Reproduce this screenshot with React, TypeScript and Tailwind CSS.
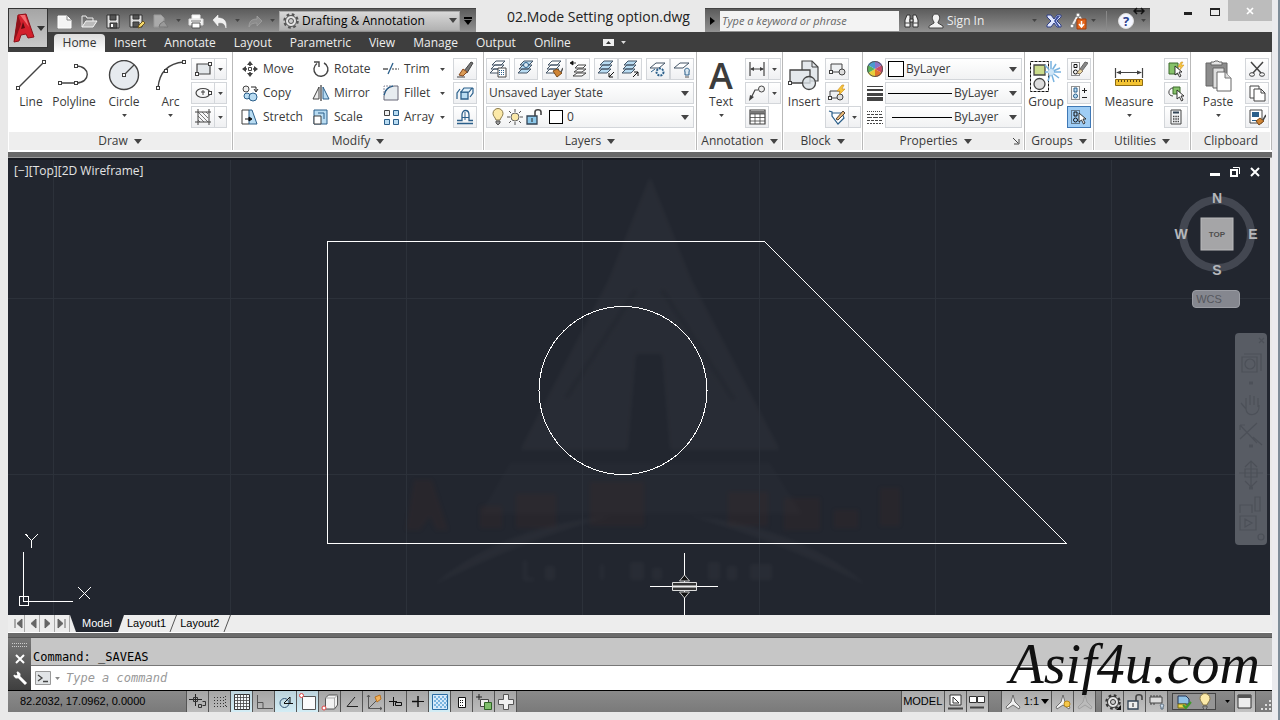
import type { ReactNode } from "react";
import clsx from "clsx";

interface IconProps {
  w?: number;
  h?: number;
  children: ReactNode;
  className?: string;
}
const Icon = ({ w = 18, h = 18, children, className }: IconProps) => (
  <svg
    width={w}
    height={h}
    viewBox={`0 0 ${w} ${h}`}
    fill="none"
    stroke="#444"
    className={clsx("shrink-0", className)}
    aria-hidden="true"
  >
    {children}
  </svg>
);

const Caret = ({ small, className }: { small?: boolean; className?: string }) => (
  <svg
    width={small ? 5 : 8}
    height={small ? 3 : 5}
    viewBox="0 0 8 5"
    className={clsx("pointer-events-none shrink-0", className ?? "text-[#444]")}
    aria-hidden="true"
  >
    <path d="M0 0h8L4 5z" fill="currentColor" />
  </svg>
);

const DARK = "#3f3f3f";
const BLUE = "#2b5f8a";
const SKY = "#b9dcf2";

/* quick access toolbar */
const qat = {
  new: (
    <Icon>
      <path d="M2 4h9l4 4v8H2z" fill="#f4f4f4" stroke="#fff" />
      <path d="M11 4v4h4" stroke="#888" />
    </Icon>
  ),
  open: (
    <Icon>
      <path d="M2 15V4h4l1 2h6v3" stroke="#eee" />
      <path d="M2 15L6 9h11l-4 6z" fill="#bbb" stroke="#f4f4f4" />
    </Icon>
  ),
  save: (
    <Icon>
      <path d="M3 3h12v13H3z" fill="#ddd" stroke="#333" />
      <path d="M6 3h6v5H6zM6 11h7v5H6z" fill="#555" stroke="#333" />
      <path d="M8 12v3" stroke="#fff" strokeWidth="2" />
    </Icon>
  ),
  saveAs: (
    <Icon>
      <path d="M2 3h12v12H2z" fill="#ddd" stroke="#333" />
      <path d="M5 3h6v4H5zM5 10h6v5H5z" fill="#555" stroke="#333" />
      <path d="M10 16l1-3 4-4 2 2-4 4z" fill="#f5d86b" stroke="#6b5520" />
    </Icon>
  ),
  sheets: (
    <Icon>
      <path d="M2 3h7l3 3v9H2z" fill="#aaa" stroke="#999" />
      <path d="M8 12l4-3 4 6H7z" fill="#999" stroke="#777" />
    </Icon>
  ),
  print: (
    <Icon>
      <path d="M5 7V3h8v4" fill="#fff" stroke="#eee" />
      <path d="M2 7h14v6H2z" fill="#f4f4f4" stroke="#ddd" />
      <path d="M5 11h8v5H5z" fill="#fff" stroke="#555" />
      <path d="M4 9h10" stroke="#777" />
    </Icon>
  ),
  undo: (
    <Icon>
      <path d="M7 3v3c5 0 9 2 8 10-1-4-3-6-8-5v3L2 8z" fill="#f0f0f0" stroke="#fff" strokeWidth=".5" />
    </Icon>
  ),
  redo: (
    <Icon>
      <path d="M11 4v3C6 7 3 9 3 15c1-3 4-4 8-4v3l5-5z" fill="#8b8b8b" stroke="#a5a5a5" strokeWidth=".7" />
    </Icon>
  ),
};

const GearShape = ({ stroke = "#333", fill = "none" }) => (
  <>
    <circle cx="9" cy="9" r="6.5" fill={fill} stroke={stroke} strokeWidth="2.5" strokeDasharray="2.6 2.5" />
    <circle cx="9" cy="9" r="5.5" fill="#e4e4e4" stroke={stroke} />
    <circle cx="9" cy="9" r="2.5" fill="#ccc" stroke={stroke} />
  </>
);

/* draw panel */
const node = (x: number, y: number) => (
  <rect key={`${x}-${y}`} x={x - 1.5} y={y - 1.5} width="3" height="3" fill="#fff" stroke={DARK} />
);
const draw = {
  line: (
    <Icon w={32} h={32}>
      <path d="M3 28L29 2" strokeWidth="1.4" />
      {node(3, 28)}
      {node(29, 2)}
    </Icon>
  ),
  polyline: (
    <Icon w={32} h={32}>
      <path d="M2 23h16c15 0 15-17 0-17" strokeWidth="1.4" />
      {node(2, 23)}
      {node(18, 23)}
      {node(18, 6)}
    </Icon>
  ),
  circle: (
    <Icon w={32} h={32}>
      <circle cx="16" cy="15" r="14.5" fill="#e6eaee" strokeWidth="1.4" />
      <path d="M16 15L26 5" strokeWidth="1.2" />
      {node(16, 15)}
    </Icon>
  ),
  arc: (
    <Icon w={32} h={32}>
      <path d="M3 28Q5 4 29 2" strokeWidth="1.4" />
      {node(3, 28)}
      {node(11, 11)}
      {node(29, 2)}
    </Icon>
  ),
  rect: (
    <Icon>
      <path d="M3 4h13v10H3z" fill="#e3e7ea" strokeWidth="1.2" />
      {node(3, 14)}
      {node(16, 4)}
    </Icon>
  ),
  ellipse: (
    <Icon>
      <ellipse cx="9" cy="9" rx="7" ry="4.5" strokeWidth="1.2" />
      <path d="M9 6v5M7 8h4" />
      {node(16, 9)}
    </Icon>
  ),
  hatch: (
    <Icon>
      <path d="M4 1v16M15 1v16M1 4h16M1 14h16" />
      <path d="M4 8l6 6M4 4l10 10M8 4l6 6M12 4l2 2M4 12l2 2" strokeWidth=".7" />
    </Icon>
  ),
};

/* modify panel */
const modify = {
  move: (
    <Icon>
      <path d="M9 3v3M9 12v3M3 9h3M12 9h3" stroke={DARK} strokeWidth="1.6" />
      <path d="M9 1l3 4H6zM9 17l3-4H6zM1 9l4-3v6zM17 9l-4-3v6z" fill={DARK} stroke="none" />
      <path d="M7.5 7.5h3v3h-3z" fill="#fff" />
    </Icon>
  ),
  copy: (
    <Icon>
      <circle cx="5" cy="5" r="3" fill="#eee" />
      <circle cx="6" cy="12" r="3" fill={SKY} stroke={BLUE} />
      <circle cx="12" cy="13" r="4" fill={SKY} stroke={BLUE} />
      <path d="M10 3h5v4M13 5l2 3 2-3" stroke="#222" />
    </Icon>
  ),
  stretch: (
    <Icon>
      <path d="M11 2l5 14H8V2z" fill={SKY} stroke={BLUE} />
      <path d="M8 2H1v14h7" stroke={DARK} />
      <path d="M4 11h6M8 9l3 2-3 2z" fill="#111" stroke="#111" />
    </Icon>
  ),
  rotate: (
    <Icon>
      <path d="M5 3.5A7 7 0 1 0 12 3" strokeWidth="1.4" />
      <path d="M2 2h5v5" strokeWidth="1.4" />
    </Icon>
  ),
  mirror: (
    <Icon>
      <path d="M1 15L7 3v12z" fill="#eee" />
      <path d="M17 15L11 3v12z" fill={SKY} stroke={BLUE} />
      <path d="M9 1v16" stroke="#111" />
    </Icon>
  ),
  scale: (
    <Icon>
      <path d="M2 2h13v14H2z" fill={SKY} stroke={BLUE} />
      <path d="M2 8h7v8H2z" fill="#fff" stroke={DARK} />
      <path d="M6 5h6v6" stroke={BLUE} />
    </Icon>
  ),
  trim: (
    <Icon>
      <path d="M1 9h5" stroke={DARK} strokeWidth="1.3" />
      <path d="M6 14L11 3" stroke={BLUE} strokeWidth="1.3" />
      <path d="M10 9h7" stroke={DARK} strokeDasharray="2 1" />
    </Icon>
  ),
  fillet: (
    <Icon>
      <path d="M2 16V12Q3 3 12 2h4v14z" fill="#e7ecf0" stroke="#667" />
      <path d="M2 11Q4 3 11 2" stroke={BLUE} strokeWidth="1.5" />
      <path d="M2 9V2h7" stroke="#889" strokeDasharray="2 1" />
    </Icon>
  ),
  array: (
    <Icon>
      <path d="M2.5 2.5h5v5h-5z" fill="#eee" stroke={DARK} />
      <path d="M11.500 2.500h5v5h-5zM2.500 11.500h5v5h-5zM11.500 11.500h5v5h-5z" fill={SKY} stroke={BLUE} />
    </Icon>
  ),
  erase: (
    <Icon>
      <path d="M8 11L15 2l2 1-6 10z" fill="#777" stroke="#444" />
      <path d="M3 15l4-6 4 3-4 4z" fill="#d99a55" stroke="#8a4a1f" />
      <path d="M1 17h8" />
    </Icon>
  ),
  explode: (
    <Icon>
      <path d="M5 8h7v7H5z" fill={SKY} stroke={BLUE} strokeWidth="1.3" />
      <path d="M5 8l3-4h8l-3 4zM14 13l3-4V4M1 15V9l3-4" fill="#dff0fb" stroke={BLUE} strokeWidth="1.2" />
    </Icon>
  ),
  offset: (
    <Icon>
      <path d="M1 15.500h16M1 12.500h5V7c0-6 7-6 7 0v5.500h4" stroke={BLUE} strokeWidth="1.3" />
      <path d="M9 4v8M6 9.500h7" stroke={BLUE} />
    </Icon>
  ),
};

const Stack = ({ children, fill = "#fff" }: { children?: ReactNode; fill?: string }) => (
  <Icon>
    <path d="M1 13l4-4h9l-4 4zM2 9l4-4h9l-4 4zM3 5l4-4h9l-4 4z" fill={fill} stroke="#456" />
    {children}
  </Icon>
);
const Plane = ({ children }: { children?: ReactNode }) => (
  <Icon>
    <path d="M1 8l6-5h9l-6 5z" fill="#fff" stroke="#456" />
    {children}
  </Icon>
);
const layers = {
  props: (
    <Stack>
      <path d="M9 8h8v9H9z" fill="#fff" />
      <path d="M10 10.500h6M10 12.500h6M10 14.500h6" stroke={BLUE} strokeDasharray="1 1" />
    </Stack>
  ),
  current: (
    <Stack fill={SKY}>
      <circle cx="9" cy="5" r="2.5" fill="#dce9f2" stroke={BLUE} />
    </Stack>
  ),
  match: (
    <Stack>
      <path d="M8 11l4-2 5 4-5 4z" fill="#cf8434" stroke="#7b4a18" />
      <path d="M16 12l2-4" stroke="#555" strokeWidth="1.5" />
    </Stack>
  ),
  previous: (
    <Icon>
      <path d="M4 16l4-3h9l-4 3zM5 12l4-3h8l-4 3zM6 8l3-3h8l-3 3z" fill="#fff" />
      <path d="M2 3h5M4 1L1 3l3 2z" stroke="#111" fill="#111" strokeWidth=".8" />
    </Icon>
  ),
  isolate: (
    <Stack fill={SKY}>
      <path d="M17 12l-5 5M12 13v4h4" stroke="#111" />
    </Stack>
  ),
  unisolate: (
    <Stack fill={SKY}>
      <path d="M12 17l5-5M13 12h4v4" stroke="#111" />
    </Stack>
  ),
  freeze: (
    <Plane>
      <circle cx="11" cy="12" r="3.5" fill="#eaf4fb" stroke={BLUE} strokeWidth="2" strokeDasharray="2 1" />
      <path d="M2 12l4-3" stroke={BLUE} />
    </Plane>
  ),
  off: (
    <Plane>
      <path d="M12 15v-3c-2-5 6-5 4 0v3z" fill="#dce9f2" stroke={BLUE} />
      <path d="M12 17h4" stroke="#555" />
    </Plane>
  ),
};

const Bulb = () => (
  <Icon w={14} h={18}>
    <path d="M5 12C4 9 2 8 2 5.500a5 5 0 0 1 10 0C12 8 10 9 9 12z" fill="#fbe9a8" stroke="#8a7a4a" />
    <path d="M5 13h4v2L7 17l-2-2z" fill="#999" stroke="#555" />
  </Icon>
);
const Sun = () => (
  <Icon w={16} h={18}>
    <circle cx="8" cy="9" r="4" fill="#fbe9a8" stroke="#666" />
    <path d="M8 1v3M8 14v3M0 9h3M13 9h3M2 3l2 2M12 13l2 2M14 3l-2 2M4 13l-2 2" stroke="#555" />
  </Icon>
);
const Unlock = ({ fill = "#8cc8ea" }) => (
  <Icon w={18} h={18}>
    <path d="M2 8h10v8H2z" fill={fill} stroke="#345" strokeWidth="1.3" />
    <path d="M10 8V4c0-3 6-3 6 0v3" strokeWidth="1.6" />
    <path d="M7 10v4" stroke="#222" />
  </Icon>
);

/* annotation and block panels */
const annotate = {
  dim: (
    <Icon>
      <path d="M2 2v14M16 2v14M3 9h12" strokeWidth="1.2" />
      <path d="M2 9l4-2v4zM16 9l-4-2v4z" fill={DARK} stroke="none" />
    </Icon>
  ),
  leader: (
    <Icon>
      <circle cx="13.500" cy="5" r="3" fill="#eee" />
      <path d="M10 6H7L3 14" strokeWidth="1.2" />
      <path d="M1 17l1-6 4 2z" fill={DARK} stroke="none" />
    </Icon>
  ),
  table: (
    <Icon>
      <path d="M2 2h15v14H2z" fill="#fff" strokeWidth="1.2" />
      <path d="M2 3h15v3H2z" fill="#777" stroke="none" />
      <path d="M2 6h15M2 9.500h15M2 13h15M7 6v10M12 6v10" strokeWidth=".8" />
    </Icon>
  ),
};
const block = {
  insert: (
    <Icon w={32} h={32}>
      <path d="M14 1h10l6 6v14H14z" fill="#e4e8ec" strokeWidth="1.200" />
      <path d="M24 1v6h6" />
      <path d="M2 10h20v13H2z" fill="#e4e8ec" strokeWidth="1.300" />
      <circle cx="21" cy="23" r="6.500" fill="#dbe1e6" fillOpacity=".8" strokeWidth="1.300" />
      {node(2, 23)}
    </Icon>
  ),
  create: (
    <Icon>
      <path d="M3 4h11v8H3z" fill="#eef0f2" />
      <circle cx="14" cy="12" r="3" fill="#ddd" />
      {node(3, 12)}
    </Icon>
  ),
  edit: (
    <Icon>
      <path d="M2 7h10v7H2z" fill="#eef0f2" />
      <circle cx="12" cy="13" r="3" fill="#ddd" />
      <path d="M14 1L9 7h3l-1 4 6-6h-3l2-4z" fill="#f8c73d" stroke="#c98a1c" strokeWidth=".6" />
      {node(2, 14)}
    </Icon>
  ),
  attribute: (
    <Icon>
      <path d="M1 3l3 1v4l6 8 6-6-2-5H4" fill="#fff" stroke={BLUE} strokeWidth="1.2" />
      <path d="M8 11l7-8 2 2-7 7z" fill="#e8b878" stroke="#543" />
    </Icon>
  ),
};

const ColorWheel = () => (
  <Icon w={16} h={16}>
    <g stroke="none">
      <path d="M8 8L8 0A8 8 0 0 1 15 4z" fill="#8a72c9" />
      <path d="M8 8L15 4A8 8 0 0 1 15 12z" fill="#cc4a6a" />
      <path d="M8 8L15 12A8 8 0 0 1 8 16z" fill="#e2722b" />
      <path d="M8 8L8 16A8 8 0 0 1 1 12z" fill="#e8cf3b" />
      <path d="M8 8L1 12A8 8 0 0 1 1 4z" fill="#58b35a" />
      <path d="M8 8L1 4A8 8 0 0 1 8 0z" fill="#4a9bd0" />
    </g>
    <circle cx="8" cy="8" r="7.500" stroke="#555" />
  </Icon>
);
const Weights = () => (
  <Icon w={16} h={16}>
    <path d="M0 1.500h16" />
    <path d="M0 5h16" strokeWidth="2" />
    <path d="M0 9.500h16" strokeWidth="3" />
    <path d="M0 14h16" strokeWidth="4" />
  </Icon>
);
const Linetypes = () => (
  <Icon w={16} h={16}>
    <path d="M0 2.500h16" strokeDasharray="1 1" />
    <path d="M0 5.500h16M0 11.500h16" strokeDasharray="3 1" />
    <path d="M0 8.500h16" strokeDasharray="5 1" />
    <path d="M0 14.500h16" strokeDasharray="2 1" />
  </Icon>
);

const Pointer = ({ x, y }: { x: number; y: number }) => (
  <path
    transform={`translate(${x} ${y})`}
    d="M0 0v9l2.500-2 2 4 1.500-1-2-4h3z"
    fill="#fff"
    stroke="#222"
    strokeWidth=".9"
  />
);
const groups = {
  group: (
    <Icon w={34} h={34}>
      <path d="M1.500 2.500h18v30h-18z" stroke="#111" strokeDasharray="3 1" />
      <path d="M5 6h11v10H5z" fill="#cbdc8b" strokeWidth="1.300" />
      <circle cx="10.500" cy="25" r="5.500" fill="#ddd" strokeWidth="1.300" />
      <path
        d="M22 13V2M22 13l5-8M22 13l9-4M22 13h10M22 13l8 6M22 13l3 10M22 13l-3 9M22 13l-6-7M22 13h-6"
        stroke="#79b3df"
        strokeWidth="1.500"
      />
      <circle cx="22" cy="13" r="3" fill="#cfe6f8" stroke="none" />
    </Icon>
  ),
  ungroup: (
    <Icon>
      <path d="M1.500 2.500h8v13h-8z" stroke="#222" strokeDasharray="1 1" />
      <path d="M4 4.500h3v3H4z" stroke="#111" />
      <circle cx="5.500" cy="12" r="2" stroke="#111" />
      <path d="M10 9l5-7 3 1-6 8z" fill="#888" stroke="#666" />
      <path d="M7 13l3-4 3 2-3 3z" fill="#ead8a0" stroke="#876" />
    </Icon>
  ),
  edit: (
    <Icon>
      <path d="M1.500 2.500h8v13h-8z" stroke="#222" strokeDasharray="1 1" />
      <path d="M4 4h3v4H4z" stroke={BLUE} fill={SKY} />
      <circle cx="5.500" cy="12" r="2" stroke={BLUE} fill={SKY} />
      <path d="M12 6.500h5M14.500 4v5M12 13.500h5" stroke="#222" />
    </Icon>
  ),
  select: (
    <Icon>
      <path d="M1.500 2.500h8v13h-8z" stroke="#222" strokeDasharray="1 1" />
      <path d="M4 4h3v4H4z" stroke="#111" />
      <circle cx="5.500" cy="12" r="2" stroke="#111" />
      <Pointer x={9} y={5} />
    </Icon>
  ),
};
const utilities = {
  measure: (
    <Icon w={32} h={32}>
      <path d="M2.500 8v10M29.500 8v10M4 12.500h24" strokeWidth="1.200" />
      <path d="M3 12.500l5-2v4zM29 12.500l-5-2v4z" fill={DARK} stroke="none" />
      <path d="M2.500 19.500h27v6h-27z" fill="#f3c332" stroke="#8d6b12" />
      <path d="M5 21h23" stroke="#5b4510" strokeWidth="2" strokeDasharray="1 2" />
    </Icon>
  ),
  quick: (
    <Icon>
      <path d="M2 3h9v11H2z" fill="#86c26a" stroke="#3d6b2c" />
      <path d="M14 2l-3 5h3l-2 4 5-6h-3l2-3z" fill="#f8c73d" stroke="#c98a1c" strokeWidth=".5" />
      <Pointer x={8} y={6} />
    </Icon>
  ),
  similar: (
    <Icon>
      <path d="M6 3h7v7H6z" fill="#86c26a" stroke="#3d6b2c" />
      <path d="M6 4c-5 0-6 8 0 8" />
      <Pointer x={10} y={6} />
    </Icon>
  ),
  calc: (
    <Icon>
      <path d="M4 2h10v14H4z" fill="#f4f6f8" />
      <path d="M6 4.500h6" stroke="#345" strokeWidth="2" />
      <path d="M6 8.500h6M6 11h6M6 13.500h6" strokeDasharray="1.500 .8" strokeWidth="1.500" />
    </Icon>
  ),
};
const clipboard = {
  paste: (
    <Icon w={32} h={32}>
      <path d="M4 3h21v23H4z" fill="#8c8c8c" stroke="#666" />
      <path d="M9 5V2h3l1-1h3l1 1h3v3z" fill="#e6e6e6" stroke="#666" />
      <path d="M11 8h11v20H11z" fill="#dfdfdf" stroke="#666" />
      <path d="M15 12h8l6 6v13H15z" fill="#fff" stroke="#666" />
      <path d="M23 12v6h6" stroke="#777" fill="#ddd" />
    </Icon>
  ),
  cut: (
    <Icon>
      <path d="M3 2l10 11M15 2L5 13" strokeWidth="1.500" />
      <ellipse cx="4" cy="14.500" rx="2.500" ry="1.800" />
      <ellipse cx="14" cy="14.500" rx="2.500" ry="1.800" />
    </Icon>
  ),
  copy: (
    <Icon>
      <path d="M2 2h9v12H2z" fill="#fff" />
      <path d="M6 5h7l4 4v8H6z" fill="#fff" />
      <path d="M13 5v4h4" />
    </Icon>
  ),
  match: (
    <Icon>
      <path d="M2 2h12v13H2z" fill="#fff" />
      <path d="M4 4h7v5H4z" fill={BLUE} stroke="none" />
      <path d="M4 12.500h5" stroke={BLUE} />
      <path d="M8 13l4-3 4 3-5 4z" fill="#cf8434" stroke="#7b4a18" />
      <path d="M15 12l3-5" strokeWidth="1.500" />
    </Icon>
  ),
};

interface BtnProps {
  label: string;
  icon: ReactNode;
  active?: boolean;
}
const ToolButton = ({ label, icon, active }: BtnProps) => (
  <button
    aria-label={label}
    className={clsx(
      "flex h-[22px] w-6 items-center justify-center border",
      active ? "border-[#3f78b5] bg-[#9fcdf5]" : "border-[#d3d6da] bg-gradient-to-b from-white to-[#eff0f2]"
    )}
  >
    {icon}
  </button>
);
const SplitButton = ({ label, icon }: BtnProps) => (
  <div className="flex">
    <ToolButton label={label} icon={icon} />
    <button
      aria-label={`${label} options`}
      className="-ml-px flex h-[22px] w-[13px] items-center justify-center border border-[#d3d6da] bg-gradient-to-b from-white to-[#eff0f2]"
    >
      <Caret small />
    </button>
  </div>
);
const BigButton = ({ label, icon, menu, className }: BtnProps & { menu?: boolean; className?: string }) => (
  <button className={clsx("flex shrink-0 flex-col items-center", className)}>
    <span className="flex h-9 items-center justify-center">{icon}</span>
    <span className="leading-4">{label}</span>
    {menu && <Caret small className="mt-1 text-[#444]" />}
  </button>
);
const TextButton = ({ label, icon, menu }: BtnProps & { menu?: boolean }) => (
  <button className="flex h-[22px] items-center">
    {icon}
    <span className="ml-1">{label}</span>
    {menu && <Caret small className="mr-2 ml-auto text-[#444]" />}
  </button>
);
const Column = ({ children, className }: { children: ReactNode; className?: string }) => (
  <div className={clsx("flex shrink-0 flex-col gap-0.5", className)}>{children}</div>
);

interface ComboProps {
  label: string;
  value: string;
  children?: ReactNode;
}
const Combo = ({ label, value, children }: ComboProps) => (
  <div className="flex h-[22px] w-full min-w-0 items-center border border-[#d3d6da] bg-gradient-to-b from-white to-[#f1f2f3] px-0.5">
    {children}
    <select aria-label={label} className="min-w-0 flex-1 appearance-none bg-transparent outline-none">
      <option>{value}</option>
    </select>
    <Caret className="mr-0.5 text-[#444]" />
  </div>
);

interface PanelProps {
  title: string;
  menu?: boolean;
  launcher?: boolean;
  children: ReactNode;
}
const Panel = ({ title, menu = true, launcher, children }: PanelProps) => (
  <section className="flex min-w-0 flex-col border-r border-[#b9b9b9] bg-white">
    <div className="flex h-20 pt-1.5">{children}</div>
    <footer className="mx-px flex h-[18px] items-center justify-center bg-[#eeeeee]">
      <span>{title}</span>
      {menu && <Caret className="ml-1.5 text-[#444]" />}
      {launcher && (
        <Icon w={8} h={8} className="-mr-8 ml-10">
          <path d="M1 1l5 5M7 2v5H2" />
        </Icon>
      )}
    </footer>
  </section>
);

const tabs = ["Insert", "Annotate", "Layout", "Parametric", "View", "Manage", "Output", "Online"];

const Bar = "bg-gradient-to-b from-[#5c5c5c] to-[#929292]";

function TitleBar() {
  return (
    <header className="relative flex h-8">
      <div className={clsx("mt-2 flex w-[468px] shrink-0 items-center border-t border-[#444] pl-12", Bar)}>
        <div className="flex flex-1 items-center gap-1.5">
          <button aria-label="New">{qat.new}</button>
          <button aria-label="Open">{qat.open}</button>
          <button aria-label="Save">{qat.save}</button>
          <button aria-label="Save as">{qat.saveAs}</button>
          <button aria-label="Sheet set">{qat.sheets}</button>
          <Caret small />
          <button aria-label="Plot">{qat.print}</button>
          <button aria-label="Undo">{qat.undo}</button>
          <Caret small />
          <button aria-label="Redo">{qat.redo}</button>
          <Caret small />
        </div>
        <div className="flex h-5 w-[181px] items-center border border-[#aaa] bg-gradient-to-b from-[#d8d8d8] to-[#b2b2b2] px-0.5">
          <Icon>
            <GearShape stroke="#555" />
          </Icon>
          <select aria-label="Workspace" className="min-w-0 flex-1 appearance-none bg-transparent pl-0.5 text-black outline-none">
            <option>Drafting &amp; Annotation</option>
          </select>
          <Caret />
        </div>
        <button aria-label="Customize toolbar" className="flex h-full w-4 flex-col items-center justify-center gap-px">
          <span className="h-0.5 w-2 bg-black" />
          <Caret className="text-black" />
        </button>
      </div>
      <h1 className="flex flex-1 items-center justify-center pl-4 text-[14px] whitespace-nowrap text-[#222]">
        02.Mode Setting option.dwg
      </h1>
      <div className={clsx("mt-2 flex w-[445px] shrink-0 items-center border-t border-[#444]", Bar)}>
        <button aria-label="Collapse search" className="flex w-[15px] justify-center">
          <Icon w={5} h={8}>
            <path d="M0 0l5 4-5 4z" fill="#000" stroke="none" />
          </Icon>
        </button>
        <input
          aria-label="Search"
          placeholder="Type a keyword or phrase"
          className="h-5 w-[179px] bg-[#f3f3f3] px-0.5 text-[11px] italic outline-none placeholder:text-[#666]"
        />
        <button aria-label="Find" className="ml-1">
          <Icon>
            <path d="M2 15V8l2-5h3v12zM10 15V3h3l2 5v7z" fill="#f2f2f2" stroke="#333" />
            <path d="M7 7h3v3H7z" fill="#ddd" stroke="#333" />
            <path d="M2 11h5M10 11h5" />
          </Icon>
        </button>
        <button className="ml-1.5 flex items-center gap-0.5 text-[#eee]">
          <Icon>
            <path d="M9 2c-5 0-4 6-2 8v1l-5 3v2h14v-2l-5-3v-1c2-2 3-8-2-8z" fill="#f2f2f2" stroke="#444" />
          </Icon>
          Sign In
        </button>
        <Caret small className="ml-auto text-[#444]" />
        <button aria-label="Exchange" className="ml-2">
          <Icon>
            <path d="M2 3h4l3 4 3-4h4v2l-4 4 4 4v2h-4l-3-4-3 4H2v-2l4-4-4-4z" fill="#dfe6ff" stroke="#2f3f86" />
            <path d="M9 9l3-5h3l-4 5 4 6h-2z" fill="#3d4f9c" stroke="none" />
          </Icon>
        </button>
        <button aria-label="Stay connected" className="ml-1.5">
          <Icon>
            <path d="M3 14L9 3l4 5" stroke="#eee" strokeWidth="2" />
            <circle cx="9" cy="3" r="2" fill="#fff" stroke="#777" />
            <circle cx="3" cy="14" r="2" fill="#fff" stroke="#777" />
            <path d="M8 7h9v10H8z" fill="#e2641b" stroke="#a33f0c" />
            <path d="M12.500 9v5M10 12l2.500 3 2.500-3" stroke="#fff" strokeWidth="1.500" />
          </Icon>
        </button>
        <Caret small className="ml-1 text-[#444]" />
        <span className="mx-2.5 h-5 w-px bg-[#888]" />
        <button aria-label="Help" className="mr-1.5">
          <Icon>
            <circle cx="9" cy="9" r="7.500" fill="#f4f6ff" stroke="#ddd" />
            <text x="9" y="14" textAnchor="middle" fontSize="13" fontWeight="700" fill="#2b3f8c" stroke="none">
              ?
            </text>
          </Icon>
        </button>
        <Caret small className="mr-1 text-[#444]" />
      </div>
      <Icon w={12} h={8} className="absolute top-[7px] right-[127px]">
        <path d="M2 4h8M4 1L1 4l3 3M8 1l3 3-3 3" stroke="#111" strokeWidth="1.500" />
      </Icon>
      <div className="ml-auto flex h-[21px] w-[122px] shrink-0">
        <button aria-label="Minimize" className="ml-6 flex w-7 items-center justify-center">
          <span className="mt-1.5 h-[3px] w-2 bg-[#222]" />
        </button>
        <button aria-label="Maximize" className="flex w-[26px] items-center justify-center">
          <span className="mt-0.5 h-2 w-2.5 border border-t-2 border-[#222]" />
        </button>
        <button aria-label="Close" className="flex flex-1 items-center justify-center bg-[#bcbcbc]">
          <Icon w={8} h={8}>
            <path d="M1 1l6 6M7 1L1 7" stroke="#fff" strokeWidth="1.700" />
          </Icon>
        </button>
      </div>
      <button
        aria-label="Application menu"
        className="absolute top-2 left-0 z-10 flex h-10 w-10 items-center border border-[#333] bg-gradient-to-b from-[#a5a5a5] to-[#c9c9c9] pl-1"
      >
        <Icon w={24} h={34}>
          <path d="M5 4l8-1 8 23-6 1-2-4-5 1-2 6-5 1z" fill="#d3202c" stroke="#8f1119" />
          <path d="M5 4l3 9-4 11-3 7z" fill="#8f1119" stroke="none" />
          <path d="M10 11l2 6-4 1z" fill="#5e0a10" stroke="none" />
          <path d="M7 4h5l4 12z" fill="#f26a6f" stroke="none" />
        </Icon>
        <Caret className="text-[#333]" />
      </button>
    </header>
  );
}

function Ribbon() {
  return (
    <div className="grid min-h-[100px] grid-cols-[225fr_251fr_213fr_86fr_80fr_162fr_69fr_97fr_81fr] bg-white pb-0.5">
      <Panel title="Draw">
        <BigButton label="Line" icon={draw.line} className="ml-1 w-[38px]" />
        <BigButton label="Polyline" icon={draw.polyline} className="w-12" />
        <BigButton label="Circle" icon={draw.circle} menu className="w-[52px]" />
        <BigButton label="Arc" icon={draw.arc} menu className="w-[41px]" />
        <Column>
          <SplitButton label="Rectangle" icon={draw.rect} />
          <SplitButton label="Ellipse" icon={draw.ellipse} />
          <SplitButton label="Hatch" icon={draw.hatch} />
        </Column>
      </Panel>
      <Panel title="Modify">
        <div className="grid grid-cols-[71px_70px_71px_24px] grid-rows-3 gap-y-0.5 self-start pl-2">
          <TextButton label="Move" icon={modify.move} />
          <TextButton label="Rotate" icon={modify.rotate} />
          <TextButton label="Trim" icon={modify.trim} menu />
          <ToolButton label="Erase" icon={modify.erase} />
          <TextButton label="Copy" icon={modify.copy} />
          <TextButton label="Mirror" icon={modify.mirror} />
          <TextButton label="Fillet" icon={modify.fillet} menu />
          <ToolButton label="Explode" icon={modify.explode} />
          <TextButton label="Stretch" icon={modify.stretch} />
          <TextButton label="Scale" icon={modify.scale} />
          <TextButton label="Array" icon={modify.array} menu />
          <ToolButton label="Offset" icon={modify.offset} />
        </div>
      </Panel>
      <Panel title="Layers">
        <Column className="w-full px-0.5">
          <div className="flex gap-1">
            <ToolButton label="Layer properties" icon={layers.props} />
            <ToolButton label="Make current" icon={layers.current} />
            <div className="flex">
              <ToolButton label="Match layer" icon={layers.match} />
              <ToolButton label="Previous layer" icon={layers.previous} />
            </div>
            <div className="flex">
              <ToolButton label="Isolate" icon={layers.isolate} />
              <ToolButton label="Unisolate" icon={layers.unisolate} />
            </div>
            <div className="flex">
              <ToolButton label="Freeze" icon={layers.freeze} />
              <ToolButton label="Off" icon={layers.off} />
            </div>
          </div>
          <Combo label="Layer state" value="Unsaved Layer State" />
          <Combo label="Layer" value="0">
            <span className="mr-1 flex items-center gap-0.5 pl-0.5">
              <Bulb />
              <Sun />
              <Unlock />
              <span className="ml-1 h-3.5 w-3.5 border border-black bg-white" />
            </span>
          </Combo>
        </Column>
      </Panel>
      <Panel title="Annotation">
        <BigButton
          label="Text"
          icon={<span className="text-4xl leading-9 font-semibold text-[#3c3c3c]">A</span>}
          menu
          className="w-12"
        />
        <Column>
          <SplitButton label="Dimension" icon={annotate.dim} />
          <SplitButton label="Leader" icon={annotate.leader} />
          <ToolButton label="Table" icon={annotate.table} />
        </Column>
      </Panel>
      <Panel title="Block">
        <BigButton label="Insert" icon={block.insert} className="w-[42px]" />
        <Column>
          <ToolButton label="Create" icon={block.create} />
          <ToolButton label="Edit" icon={block.edit} />
          <SplitButton label="Edit attributes" icon={block.attribute} />
        </Column>
      </Panel>
      <Panel title="Properties" launcher>
        <Column className="w-full pr-0.5 pl-1">
          <div className="flex items-center gap-0.5">
            <ColorWheel />
            <Combo label="Object color" value="ByLayer">
              <span className="mr-0.5 h-4 w-4 shrink-0 border border-black bg-white" />
            </Combo>
          </div>
          <div className="flex items-center gap-0.5">
            <Weights />
            <Combo label="Lineweight" value="ByLayer">
              <span className="mr-0.5 h-px w-16 bg-black" />
            </Combo>
          </div>
          <div className="flex items-center gap-0.5">
            <Linetypes />
            <Combo label="Linetype" value="ByLayer">
              <span className="mr-0.5 ml-1 h-px w-[60px] bg-black" />
            </Combo>
          </div>
        </Column>
      </Panel>
      <Panel title="Groups">
        <BigButton label="Group" icon={groups.group} className="w-[42px]" />
        <Column>
          <ToolButton label="Ungroup" icon={groups.ungroup} />
          <ToolButton label="Group edit" icon={groups.edit} />
          <ToolButton label="Group selection" icon={groups.select} active />
        </Column>
      </Panel>
      <Panel title="Utilities">
        <BigButton label="Measure" icon={utilities.measure} menu className="w-[70px]" />
        <Column>
          <ToolButton label="Quick select" icon={utilities.quick} />
          <ToolButton label="Select similar" icon={utilities.similar} />
          <ToolButton label="Calculator" icon={utilities.calc} />
        </Column>
      </Panel>
      <Panel title="Clipboard" menu={false}>
        <BigButton label="Paste" icon={clipboard.paste} menu className="w-[54px]" />
        <Column>
          <ToolButton label="Cut" icon={clipboard.cut} />
          <ToolButton label="Copy clip" icon={clipboard.copy} />
          <ToolButton label="Match properties" icon={clipboard.match} />
        </Column>
      </Panel>
    </div>
  );
}

function Drawing() {
  return (
    <main className="relative mr-0.5 min-h-80 flex-1 overflow-hidden border-t-2 border-[#17191f] bg-[#22262f]">
      <svg viewBox="8 160 1262 455" className="absolute inset-0 h-full w-full" role="img" aria-label="Drawing area">
        <g className="blur-[2px]">
          <g fill="#fff" fillOpacity=".03">
            <path d="M650 176l42 105 88 169H670l-8-96h-26l-8 96H520l88-169z" />
            <path d="M510 462h260l32 52H480z" fillOpacity=".015" />
            <path d="M432 586q70-60 180-70-80 20-180 70zM868 586q-70-60-180-70 80 20 180 70z" />
            <path d="M523 560h4v18h8v3h-12zM545 566h10v14h-10zM600 564h4v16h-4zM630 562h14v18h-14zM652 568h10v12h-10zM708 562h12v18h-12zM727 566h10v14h-10zM750 564h22v16h-22z" />
          </g>
          <path d="M636 290L566 398M662 290l72 110" stroke="#22262f" strokeWidth="4" opacity=".7" />
          <path
            d="M414 480h18l16 50h-12l-6-14-10 14h-14zM480 528v-22h22v22zM516 528v-34h40v34zM590 526v-44h54v44zM728 526v-34h40v34zM784 530v-32h36v32zM834 528v-18h24v18zM880 526v-38h20v38z"
            fill="#6a2a18"
            fillOpacity=".09"
          />
        </g>
        <g stroke="#2c313a" shapeRendering="crispEdges">
          <path d="M53.500 158v457M230.500 158v457M406.500 158v457M582.500 158v457M759.500 158v457M935.500 158v457M1111.500 158v457" />
          <path d="M8 298.500h1262M8 474.500h1262" />
        </g>
        <g fill="none" stroke="#fff" shapeRendering="crispEdges">
          <path d="M764.500 241.500H327.500v302h739z" />
          <circle cx="623" cy="390.500" r="84" />
          <path d="M23.500 552v49.500H73M19.500 596.500h9v9h-9z" />
          <path d="M25.500 534l6 6.500v7M38 534l-6.500 6.500M78.500 587.500l12 12M90.500 587.500l-12 12" />
          <path d="M684.500 553v62M650 586.500h68" />
        </g>
        <path d="M684.500 575l5 6h-10zM684.500 598l5-6h-10z" fill="#111" stroke="#ccc" />
        <path d="M672.500 582.500h24v8h-24z" fill="#333" stroke="#ddd" />
        <path d="M673 586.500h24" stroke="#eee" strokeWidth="2" />
      </svg>
      <div className="absolute top-0.5 left-1.5 flex text-[12px] leading-[18px] text-[#e4e4e4]">
        <button>[−]</button>
        <button>[Top]</button>
        <button>[2D Wireframe]</button>
      </div>
      <div className="absolute top-[7px] right-2.5 flex gap-2.5">
        <button aria-label="Minimize drawing">
          <Icon w={10} h={10}>
            <path d="M0 7.500h10" stroke="#fff" strokeWidth="3" />
          </Icon>
        </button>
        <button aria-label="Restore drawing">
          <Icon w={10} h={10}>
            <path d="M1 3h6v6H1z" stroke="#fff" strokeWidth="2" />
            <path d="M3 .5h6.500V7" stroke="#fff" />
          </Icon>
        </button>
        <button aria-label="Close drawing">
          <Icon w={10} h={10}>
            <path d="M1 1l8 8M9 1L1 9" stroke="#fff" strokeWidth="2" />
          </Icon>
        </button>
      </div>
      <svg
        width="86"
        height="90"
        viewBox="0 0 86 90"
        className="absolute top-[29px] right-2.5 font-['Liberation_Sans'] font-bold"
        role="img"
        aria-label="View cube"
      >
        <circle cx="43" cy="45" r="34" fill="none" stroke="#434751" strokeWidth="8" />
        <rect x="27" y="29" width="32" height="32" fill="#a5a5a7" stroke="#b9b9bb" />
        <g fill="#b5b7bb" fontSize="14" textAnchor="middle">
          <text x="43" y="14">N</text>
          <text x="43" y="86">S</text>
          <text x="7" y="50">W</text>
          <text x="79" y="50">E</text>
          <text x="43" y="48" fontSize="8" fill="#4d4d4d">TOP</text>
        </g>
      </svg>
      <button className="absolute top-[130px] right-[30px] h-[18px] w-12 rounded border border-[#9b9da4] bg-[#85878f] pr-3.5 font-['Liberation_Sans'] text-[11px] leading-4 text-[#55575e]">
        WCS
      </button>
      <div className="absolute top-[173px] right-[3px] h-[212px] w-8 rounded-sm bg-[#585c64]">
        <svg width="32" height="212" fill="none" stroke="#4c5058" strokeWidth="1.200" aria-hidden="true">
          <path d="M24 5l5 5M29 5l-5 5" />
          <path d="M9 21h17v17M7 24h15v15H7z" />
          <circle cx="15" cy="31" r="5" />
          <path d="M14 50h4M14 113h4M14 155h4" strokeWidth="3" />
          <path d="M11 76l-5-6M11 76v-11M15 72V62M19 72V63M23 74v-9M11 76c0 8 14 8 13-4" />
          <path d="M5 92l17 18M22 90L5 106M18 104l9 8M5 92v5M5 92h5" />
          <path d="M16 128v26M4 140h24M10 134l6-6 6 6M10 148l6 6 6-6M10 136h12v8H10z" />
          <path d="M5 183h16v14H5zM10 186v8l7-4zM5 180v-8h12v8M20 164h5v14h-5z" />
          <circle cx="26" cy="204" r="3" />
        </svg>
      </div>
    </main>
  );
}

const Slant = () => (
  <Icon w={8} h={17}>
    <path d="M7.500 0L1 17" stroke="#555" />
  </Icon>
);

function LayoutTabs() {
  const arrows = [
    ["First", "M5 4v9M12 4L7 8.500l5 4.500z"],
    ["Previous", "M11 4L6 8.500l5 4.500z"],
    ["Next", "M5 4l5 4.500L5 13z"],
    ["Last", "M10 4v9M3 4l5 4.500L3 13z"],
  ];
  return (
    <nav className="flex h-[17px] items-stretch bg-[#ededed] pl-0.5 font-['Liberation_Sans'] text-[11px] text-black">
      {arrows.map(([name, path]) => (
        <button key={name} aria-label={`${name} layout`} className="border-r border-[#aaa]">
          <Icon w={14} h={17}>
            <path d={path} fill="#666" stroke="#666" />
          </Icon>
        </button>
      ))}
      <button className="flex w-[54px] items-center justify-center bg-[#22262f] text-white [clip-path:polygon(0_0,100%_0,calc(100%_-_6px)_100%,6px_100%)]">
        Model
      </button>
      <button className="px-[3px]">Layout1</button>
      <Slant />
      <button className="pr-1 pl-[3px]">Layout2</button>
      <Slant />
    </nav>
  );
}

function CommandLine() {
  return (
    <section className="flex h-[53px] border-t border-[#555] font-['DejaVu_Sans_Mono'] text-[12px]">
      <div className="flex w-[23px] shrink-0 flex-col items-center bg-gradient-to-b from-[#787878] to-[#3f3f3f]">
        <Icon w={18} h={6} className="mt-1">
          <path d="M1 1.500h16M1 4.500h16" stroke="#ccc" strokeDasharray="1 1" />
        </Icon>
        <button aria-label="Close command line" className="mt-1.5">
          <Icon w={10} h={10}>
            <path d="M1 1l8 8M9 1L1 9" stroke="#fff" strokeWidth="2" />
          </Icon>
        </button>
        <button aria-label="Customize" className="mt-1.5">
          <Icon w={16} h={16}>
            <path d="M6 6l8 8" stroke="#fff" strokeWidth="3" />
            <path d="M2 5c0 3 3 4 5 2s1-5-2-5l1 3-2 1z" fill="#fff" stroke="#fff" />
          </Icon>
        </button>
      </div>
      <div className="flex min-w-0 flex-1 flex-col">
        <p className="flex h-7 items-end border-b border-[#777] bg-[#c6c6c6] pl-0.5 leading-4 text-black">Command: _SAVEAS</p>
        <div className="flex flex-1 items-center bg-white pl-1">
          <button aria-label="Recent commands" className="flex items-center gap-1">
            <Icon w={16} h={14}>
              <path d="M.5.500h15v13H.5z" fill="#e1e4e6" stroke="#999" />
              <path d="M3 4l4 3-4 3M8 10.500h5" strokeWidth="1.300" />
            </Icon>
            <Caret small className="text-[#888]" />
          </button>
          <input
            aria-label="Command"
            placeholder="Type a command"
            className="ml-1.5 min-w-0 flex-1 italic outline-none placeholder:text-[#999]"
          />
        </div>
      </div>
    </section>
  );
}

const status: { label: string; on?: boolean; art: ReactNode }[] = [
  { label: "Infer constraints", art: <><path d="M6.500 1v12M0 6.500h13" stroke="#222" /><path d="M4.500 4.500h4v4h-4zM9.500 11.500h3v3h-3zM13.500 8.500h3v4h-3" stroke="#333" /></> },
  { label: "Snap", art: <path d="M3 4.500h10M3 7.500h10M3 10.500h10M3 13.500h13M14.500 3v10" stroke="#333" strokeDasharray="1 2" /> },
  { label: "Grid", on: true, art: <><path d="M1.500 1.500h15v15h-15z" fill="#f6fbfd" stroke="#333" /><path d="M4.500 1v16M7.500 1v16M10.500 1v16M13.500 1v16M1 4.500h16M1 7.500h16M1 10.500h16M1 13.500h16" stroke="#444" strokeWidth=".8" /></> },
  { label: "Ortho", art: <path d="M2.500 2v13.500H18M3 9.500h5v6" stroke="#555" /> },
  { label: "Polar", on: true, art: <><circle cx="7.500" cy="10" r="4.500" stroke="#357" /><path d="M7 10.500h9M7 10l6-6v6" stroke="#111" /></> },
  { label: "Object snap", on: true, art: <><path d="M3.500 3.500h13v13h-13z" fill="#fbfbfb" stroke="#555" /><circle cx="2.500" cy="2.500" r="2" stroke="#d44" fill="#fff" /></> },
  { label: "3D object snap", art: <><path d="M4.500 5l3-3h9v10l-3 4h-9z" fill="#f2f2f2" stroke="#555" /><path d="M4.500 5h9v10M13.500 5l3-3" stroke="#aaa" /><circle cx="3" cy="15" r="2" stroke="#d44" fill="#fff" /></> },
  { label: "Object tracking", art: <path d="M12 4L4 13.500h11" stroke="#222" /> },
  { label: "Dynamic UCS", art: <><path d="M3.500 2v13.500H17M4 15L13 6M2 4l1.500-2L5 4M15 14l2 1.500-2 1.500" stroke="#555" /><path d="M10 4l5-2 1 4-4 3z" fill="#f2b25c" stroke="#b9701d" /></> },
  { label: "Dynamic input", art: <path d="M2 8.500h8M6.500 4v9M8.500 9.500h6v3h-6z" stroke="#111" /> },
  { label: "Lineweight", art: <><path d="M3 8.500h12" stroke="#111" /><path d="M3 8.500h6V3v11" stroke="#111" strokeWidth="1.500" /></> },
  { label: "Transparency", on: true, art: <><path d="M1.500 1.500h15v15h-15z" fill="#d6eafa" stroke="#2b6ea5" /><path d="M3 4h13M3 8h13M3 12h13" stroke="#78b4df" strokeWidth="2" strokeDasharray="2 2" /><path d="M5 6h11M5 10h11M5 14h11" stroke="#78b4df" strokeWidth="2" strokeDasharray="2 2" /></> },
  { label: "Quick properties", art: <><path d="M5.500 4.500h7v10h-7z" fill="#fff" stroke="#111" /><path d="M7 7.500h4M7 9.500h4M7 12.500h4" stroke="#111" strokeDasharray="1 1" /></> },
  { label: "Selection cycling", art: <><path d="M1 4h6M4 1v6" stroke="#222" /><path d="M5.500 6.500h8v7h-8z" fill="#eee" /><path d="M9.500 9.500h7v7h-7z" fill="#7fbf6c" stroke="#2f6425" /></> },
  { label: "Annotation monitor", art: <path d="M6.500 1.500h5v5h5v5h-5v5h-5v-5h-5v-5h5z" fill="#f0f0f0" stroke="#555" /> },
];

const statusBtn = "flex h-full items-center justify-center border-r border-[#555]";
const StatusButton = ({ label, children }: { label: string; children: ReactNode }) => (
  <button aria-label={label} className={clsx(statusBtn, "w-[22px] bg-gradient-to-b from-[#aaa] to-[#c2c2c2]")}>
    <Icon>{children}</Icon>
  </button>
);
const Scale = ({ faded }: { faded?: boolean }) => (
  <path
    d="M9 2l2 7 5 5-1 2-6-4-6 4-1-2 5-5z"
    fill={faded ? "#bbb" : "#f2f2f2"}
    stroke={faded ? "#999" : "#555"}
    strokeWidth=".8"
  />
);

function StatusBar() {
  return (
    <footer className="flex h-[22px] items-stretch border-t border-black bg-gradient-to-b from-[#8a8a8a] to-[#7a7a7a] font-['Liberation_Sans'] text-[11px] text-black">
      <output className="flex w-[179px] shrink-0 items-center border-r border-[#555] pl-3">82.2032, 17.0962, 0.0000</output>
      {status.map(({ label, on, art }) => (
        <button
          key={label}
          aria-label={label}
          aria-pressed={!!on}
          className={clsx(
            statusBtn,
            "w-[22px]",
            on ? "bg-gradient-to-b from-[#bcd3dc] to-[#d3edf5]" : "bg-gradient-to-b from-[#a5a5a5] to-[#bcbcbc]"
          )}
        >
          <Icon>{art}</Icon>
        </button>
      ))}
      <button className={clsx(statusBtn, "ml-auto w-11 border-l bg-gradient-to-b from-[#aaa] to-[#bdbdbd]")}>MODEL</button>
      <StatusButton label="Quick view layouts">
        <path d="M4 2h11v10H4z" fill="#fff" stroke="#333" />
        <path d="M7 4v6h6z" stroke="#333" />
        <path d="M2 15.500h15" strokeWidth="2" />
      </StatusButton>
      <StatusButton label="Quick view drawings">
        <path d="M1.500 3.500h7v6h-7zM9.500 3.500h7v6h-7z" fill="#fff" stroke="#333" />
        <path d="M2 14.500h14" strokeWidth="2" />
      </StatusButton>
      <button className={clsx(statusBtn, "ml-3 gap-0.5 border-l bg-gradient-to-b from-[#aaa] to-[#c2c2c2] px-0.5")}>
        <Icon>
          <Scale />
        </Icon>
        1:1
        <Caret className="text-black" />
      </button>
      <StatusButton label="Annotation visibility">
        <Scale />
        <circle cx="13" cy="11" r="3" fill="#f6c84a" stroke="#b98a1c" />
      </StatusButton>
      <StatusButton label="Auto scale">
        <Scale faded />
      </StatusButton>
      <span className="w-1.5 border-r border-[#555]" />
      <StatusButton label="Workspace switching">
        <GearShape />
        <path d="M17 12v5h-5z" fill="#111" stroke="none" />
      </StatusButton>
      <button aria-label="Lock toolbars" className={clsx(statusBtn, "w-[22px] bg-gradient-to-b from-[#aaa] to-[#c2c2c2]")}>
        <Unlock fill="#eee" />
      </button>
      <StatusButton label="Hardware acceleration">
        <path d="M2 4h12v6H2z" fill="#ddd" />
        <path d="M3 2v2M6 2v2M9 2v2M12 2v2M3 10v2M6 10v2" />
        <path d="M13 16v-2c-3-4 5-4 2 0v2z" fill="#cfe0f0" stroke="#567" />
      </StatusButton>
      <div className="mx-1 my-0.5 flex w-11 items-center justify-around border border-[#444] bg-[#959595]">
        <button aria-label="Isolate objects">
          <Icon w={16} h={16}>
            <path d="M2 2h8l3 3v5H2z" fill="#8fc0e4" stroke="#235" />
            <path d="M2 10h8v4H2z" fill="#e9d64b" stroke="#776a15" />
            <path d="M7 11l3 3 5-6" stroke="#3f9a2c" strokeWidth="2" />
          </Icon>
        </button>
        <button aria-label="Clean view">
          <Bulb />
        </button>
      </div>
      <button aria-label="Status bar menu" className="flex w-3.5 items-center justify-center">
        <Caret small className="text-black" />
      </button>
      <button aria-label="Clean screen" className={clsx(statusBtn, "w-[22px] border-l bg-gradient-to-b from-[#aaa] to-[#c2c2c2]")}>
        <Icon>
          <path d="M2 2h13v13H2z" fill="#eee" stroke="#333" />
          <path d="M2 3.500h13" stroke="#555" strokeWidth="3" />
        </Icon>
      </button>
      <Icon w={16} h={20}>
        <path d="M14 9v2M14 13v2M14 17v2M10 13v2M10 17v2M6 17v2" stroke="#ddd" strokeWidth="2" />
      </Icon>
    </footer>
  );
}

export default function App() {
  return (
    <div className="flex min-h-screen bg-[#e9e9e9] pl-2 font-['Open_Sans',sans-serif] text-[12px] text-[#3a3a3a]">
      <div className="relative flex min-w-0 flex-1 flex-col pb-2">
        <TitleBar />
        <nav className="flex h-5 bg-[#3e3e3e] pl-[46px] text-[#eee]">
          <button className="mt-0.5 flex w-[51px] items-center justify-center rounded-t-sm bg-gradient-to-b from-[#dcdcdc] to-white text-[#333]">
            Home
          </button>
          {tabs.map((tab) => (
            <button key={tab} className="px-[9px] pt-0.5">
              {tab}
            </button>
          ))}
          <button aria-label="Minimize ribbon" className="ml-[22px] flex items-center gap-1.5">
            <Icon w={13} h={7}>
              <path d="M1 0h11v7H1z" fill="#eee" stroke="none" />
              <path d="M4 5l2.500-3L9 5z" fill="#333" stroke="none" />
            </Icon>
            <Caret small className="text-[#ddd]" />
          </button>
        </nav>
        <Ribbon />
        <div className="h-1.5 border-b border-[#999] bg-[#686868]" />
        <Drawing />
        <LayoutTabs />
        <div className="h-[5px] border-t border-white bg-[#6b6b6b]" />
        <CommandLine />
        <StatusBar />
        <div className="pointer-events-none absolute right-3 bottom-6 font-['Liberation_Serif'] text-[56px] leading-[64px] text-[#111] italic">
          Asif4u.com
        </div>
      </div>
      <div className="w-2 border-r-2 border-[#7f8d99] bg-[#ebebee]" />
    </div>
  );
}
